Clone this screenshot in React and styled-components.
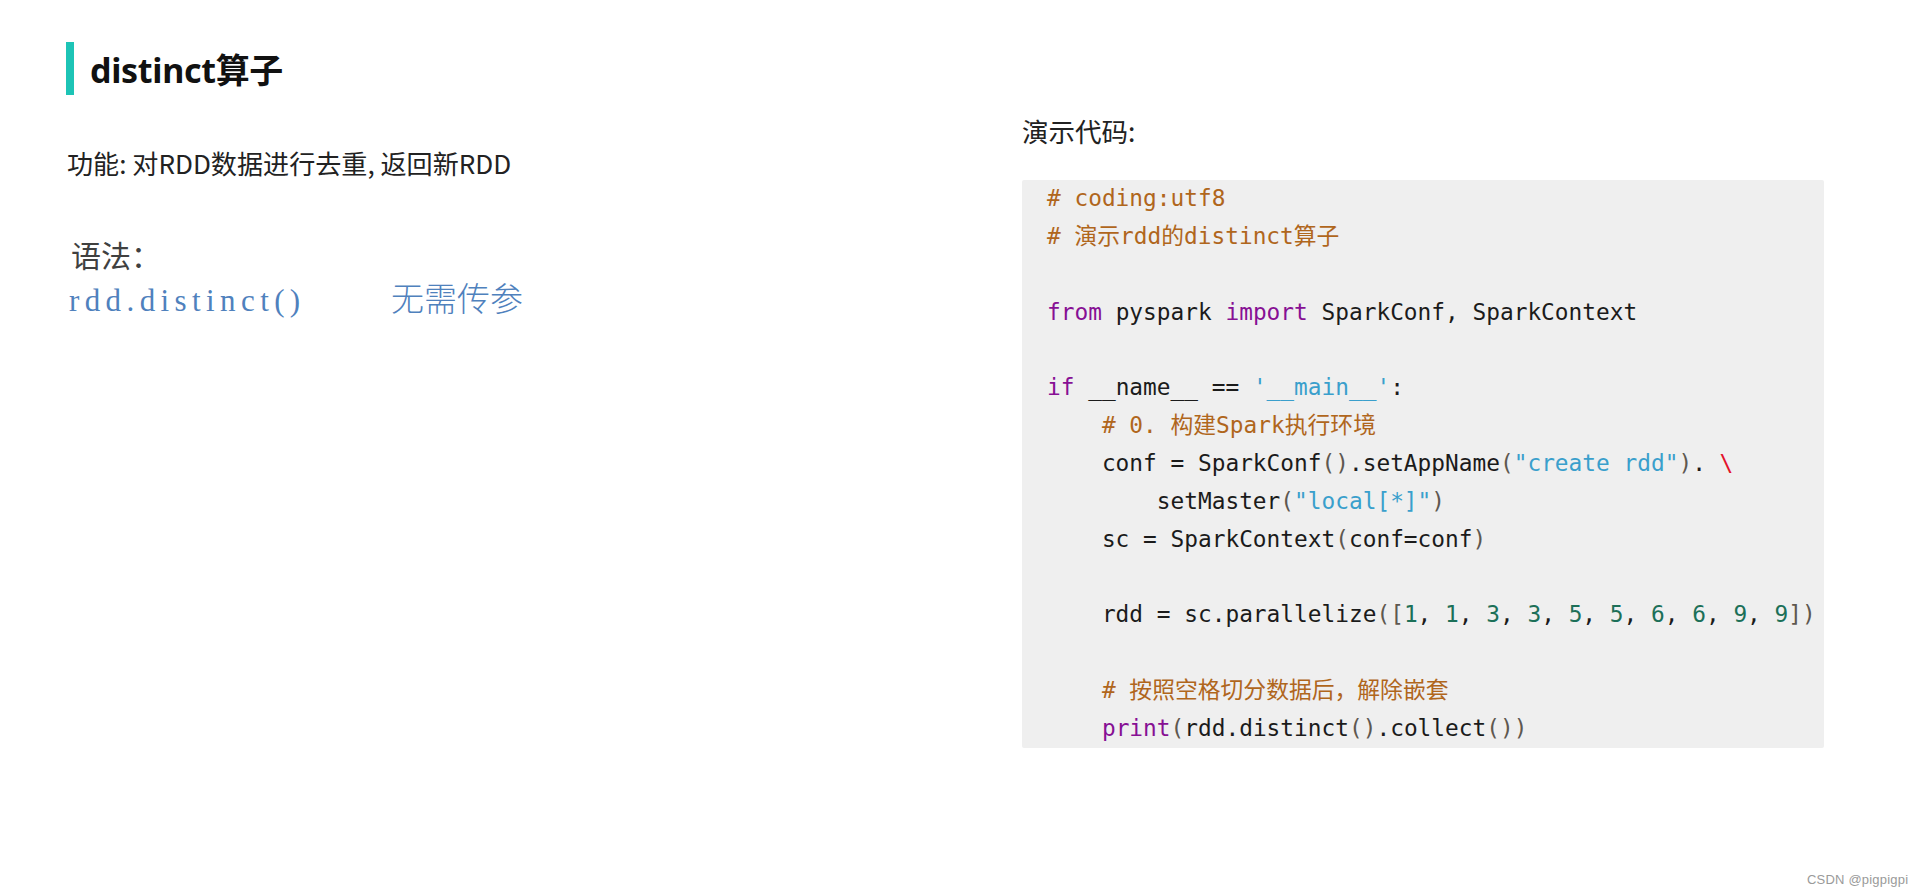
import React from "react";
import styled, { createGlobalStyle } from "styled-components";

const Global = createGlobalStyle`
  html, body { margin: 0; padding: 0; background: #ffffff; }
  body { font-family: "Noto Sans", "Noto Sans CJK SC", sans-serif; }
`;

const Page = styled.div`
  position: relative;
  width: 1919px;
  height: 896px;
  display: flex;
  align-items: flex-start;
  background: #fff;
  overflow: hidden;
`;

const LeftCol = styled.section`
  width: 1022px;
  flex: none;
  padding: 42px 0 0 66px;
  box-sizing: border-box;
  display: flex;
  flex-direction: column;
`;

const RightCol = styled.section`
  width: 802px;
  flex: none;
  padding-top: 111px;
  display: flex;
  flex-direction: column;
`;

const Heading = styled.h2`
  margin: 0;
  display: flex;
  align-items: center;
  gap: 16px;
  height: 53px;
  font-family: "Noto Sans", "Noto Sans CJK SC", sans-serif;
  font-weight: 700;
  font-size: 34px;
  color: #111;
  letter-spacing: -0.3px;
`;

const Bar = styled.span`
  width: 8px;
  height: 53px;
  background: #1dc4b6;
  flex: none;
`;

const Para = styled.p`
  margin: 49px 0 0 1px;
  font-family: "Noto Sans CJK SC", sans-serif;
  font-size: 26.1px;
  line-height: 39px;
  color: #222;
  letter-spacing: 0;
`;

const Syntax = styled.div`
  margin: 54px 0 0 5px;
  display: flex;
  flex-direction: column;
`;

const SyntaxLabel = styled.div`
  font-family: "Liberation Serif", "Noto Sans CJK SC", serif;
  font-size: 30px;
  line-height: 40px;
  color: #404040;
`;

const SyntaxLine = styled.div`
  display: flex;
  align-items: baseline;
  line-height: 40px;
  color: #4f81bd;
  margin-left: -2px;
`;

const SyntaxCode = styled.span`
  font-family: "Liberation Serif", serif;
  font-size: 31px;
  letter-spacing: 5.4px;
  width: 322px;
`;

const SyntaxNote = styled.span`
  font-family: "Noto Sans CJK SC", sans-serif;
  font-size: 33px;
  font-weight: 300;
`;

const DemoLabel = styled.div`
  font-family: "Noto Sans CJK SC", sans-serif;
  font-size: 26.5px;
  line-height: 39px;
  color: #222;
  margin-bottom: 30px;
`;

const CodeBox = styled.pre`
  margin: 0;
  background: #efefef;
  padding: 0 0 0 25px;
  border-radius: 2px;
  font-family: "DejaVu Sans Mono", "Noto Sans CJK SC", monospace;
  font-size: 22.8px;
  line-height: 37.87px;
  color: #1b1b1b;
  white-space: pre;
  overflow: hidden;
`;

const Line = styled.div`
  height: 37.87px;
`;

const colors = {
  t: "#1b1b1b",
  c: "#b0661c",
  k: "#871094",
  s: "#3a9fcc",
  n: "#1c7058",
  r: "#e3122b",
  p: "#5e5850",
};

const Tok = styled.span`
  color: ${(p) => colors[p.$type]};
`;

const Watermark = styled.div`
  position: absolute;
  left: 1807px;
  top: 872px;
  font-family: "Liberation Sans", sans-serif;
  font-size: 13px;
  color: #9a9a9a;
  letter-spacing: 0.2px;
`;

const nums = ["1", "1", "3", "3", "5", "5", "6", "6", "9", "9"];
const numToks = [];
nums.forEach((n, i) => {
  numToks.push(["n", n]);
  if (i < nums.length - 1) numToks.push(["t", ", "]);
});

const lines = [
  [["c", "# coding:utf8"]],
  [["c", "# 演示rdd的distinct算子"]],
  [],
  [["k", "from"], ["t", " pyspark "], ["k", "import"], ["t", " SparkConf, SparkContext"]],
  [],
  [["k", "if"], ["t", " __name__ == "], ["s", "'__main__'"], ["t", ":"]],
  [["t", "    "], ["c", "# 0. 构建Spark执行环境"]],
  [["t", "    conf = SparkConf().setAppName("], ["s", '"create rdd"'], ["t", "). "], ["r", "\\"]],
  [["t", "        setMaster("], ["s", '"local[*]"'], ["t", ")"]],
  [["t", "    sc = SparkContext(conf=conf)"]],
  [],
  [["t", "    rdd = sc.parallelize(["], ...numToks, ["t", "])"]],
  [],
  [["t", "    "], ["c", "# 按照空格切分数据后，解除嵌套"]],
  [["t", "    "], ["k", "print"], ["t", "(rdd.distinct().collect())"]],
];

function renderTokens(toks) {
  const out = [];
  toks.forEach(([type, text], i) => {
    if (type === "t") {
      text.split(/([()[\]])/).forEach((part, j) => {
        if (!part) return;
        const isP = /^[()[\]]$/.test(part);
        out.push(
          <Tok key={`${i}-${j}`} $type={isP ? "p" : "t"}>
            {part}
          </Tok>
        );
      });
    } else {
      out.push(
        <Tok key={i} $type={type}>
          {text}
        </Tok>
      );
    }
  });
  return out;
}

export default function App() {
  return (
    <>
      <Global />
      <Page>
        <LeftCol>
          <Heading>
            <Bar />
            <span>distinct算子</span>
          </Heading>
          <Para>功能: 对RDD数据进行去重, 返回新RDD</Para>
          <Syntax>
            <SyntaxLabel>语法：</SyntaxLabel>
            <SyntaxLine>
              <SyntaxCode>rdd.distinct()</SyntaxCode>
              <SyntaxNote>无需传参</SyntaxNote>
            </SyntaxLine>
          </Syntax>
        </LeftCol>
        <RightCol>
          <DemoLabel>演示代码:</DemoLabel>
          <CodeBox>
            {lines.map((l, i) => (
              <Line key={i}>{renderTokens(l)}</Line>
            ))}
          </CodeBox>
        </RightCol>
        <Watermark>CSDN @pigpigpi</Watermark>
      </Page>
    </>
  );
}
